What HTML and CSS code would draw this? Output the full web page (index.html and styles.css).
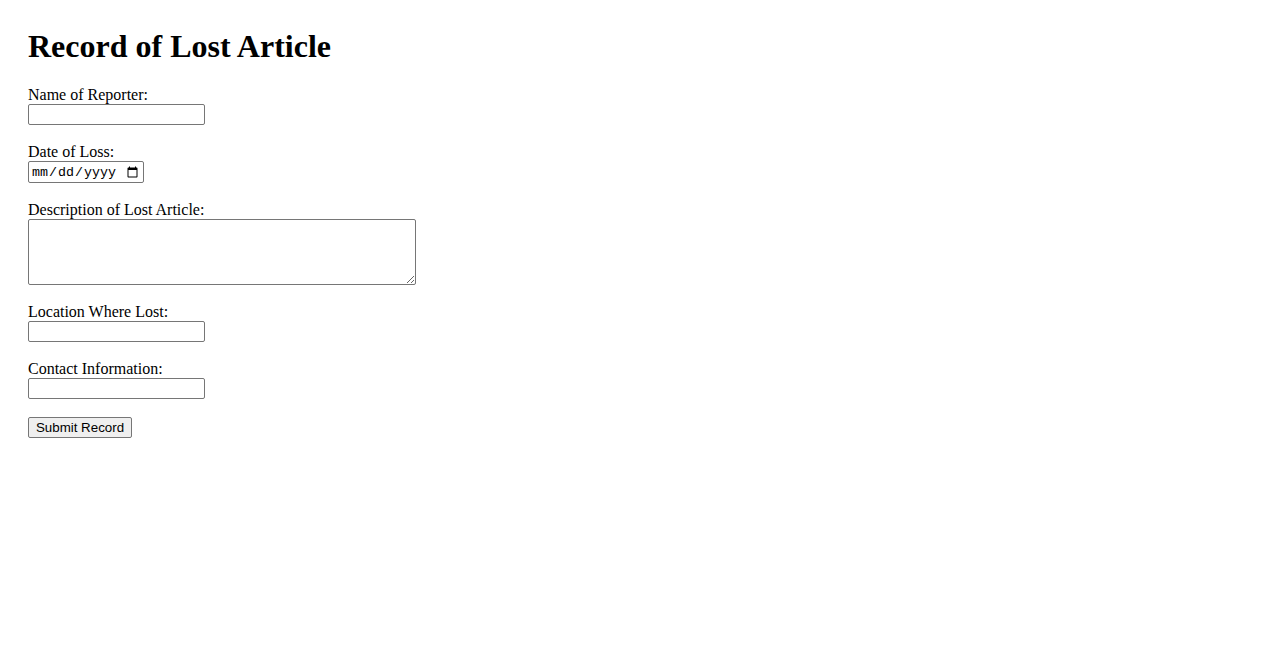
FILE: index.html
```html
<!DOCTYPE html>
<html lang="en">
<head>
<meta charset="utf-8">
<title>Record of Lost Article</title>
<link rel="stylesheet" href="styles.css">
</head>
<body>
<main class="page">
  <h1 class="title">Record of Lost Article</h1>
  <form class="form">
    <div class="field">
      <label class="label" for="name">Name of Reporter:</label>
      <input class="text-input" type="text" id="name">
    </div>
    <div class="field">
      <label class="label" for="date">Date of Loss:</label>
      <input class="date-input" type="date" id="date">
    </div>
    <div class="field">
      <label class="label" for="desc">Description of Lost Article:</label>
      <textarea class="textarea" id="desc"></textarea>
    </div>
    <div class="field">
      <label class="label" for="loc">Location Where Lost:</label>
      <input class="text-input" type="text" id="loc">
    </div>
    <div class="field">
      <label class="label" for="contact">Contact Information:</label>
      <input class="text-input" type="text" id="contact">
    </div>
    <div class="field">
      <button class="submit" type="submit">Submit Record</button>
    </div>
  </form>
</main>
</body>
</html>
```

FILE: styles.css
```css
html, body {
  background: #ffffff;
}
body {
  margin: 8px;
  font-family: "Liberation Serif", "Times New Roman", serif;
  font-size: 16px;
  color: #000000;
}
.page {
  padding: 20px;
}
.title {
  margin: 0 0 21.44px 0;
  font-size: 32px;
  font-weight: bold;
  line-height: 36.8px;
}
.form {
  display: flex;
  flex-direction: column;
  margin: 0;
}
.field {
  display: flex;
  flex-direction: column;
  align-items: flex-start;
  margin-bottom: 18px;
}
.label {
  line-height: 18px;
  height: 18px;
}
.text-input,
.date-input,
.textarea {
  box-sizing: border-box;
  margin: 0;
  border: 1px solid #767676;
  border-radius: 2px;
  background: #ffffff;
}
.text-input {
  width: 177px;
  height: 21px;
  font-family: "Liberation Sans", Arial, sans-serif;
  font-size: 13.33px;
  padding: 1px 2px;
}
.date-input {
  width: 116px;
  height: 22px;
  font-family: "Liberation Mono", "Courier New", monospace;
  font-size: 13.33px;
  padding: 1px 2px;
}
.textarea {
  width: 388px;
  height: 66px;
  padding: 2px;
  font-family: "Liberation Mono", monospace;
  font-size: 13.33px;
}
.submit {
  box-sizing: border-box;
  margin: 0;
  width: 104px;
  height: 21px;
  padding: 1px 6px;
  font-family: "Liberation Sans", Arial, sans-serif;
  font-size: 13.33px;
  color: #000000;
  background: #efefef;
  border: 1px solid #767676;
  border-radius: 2px;
}
```
